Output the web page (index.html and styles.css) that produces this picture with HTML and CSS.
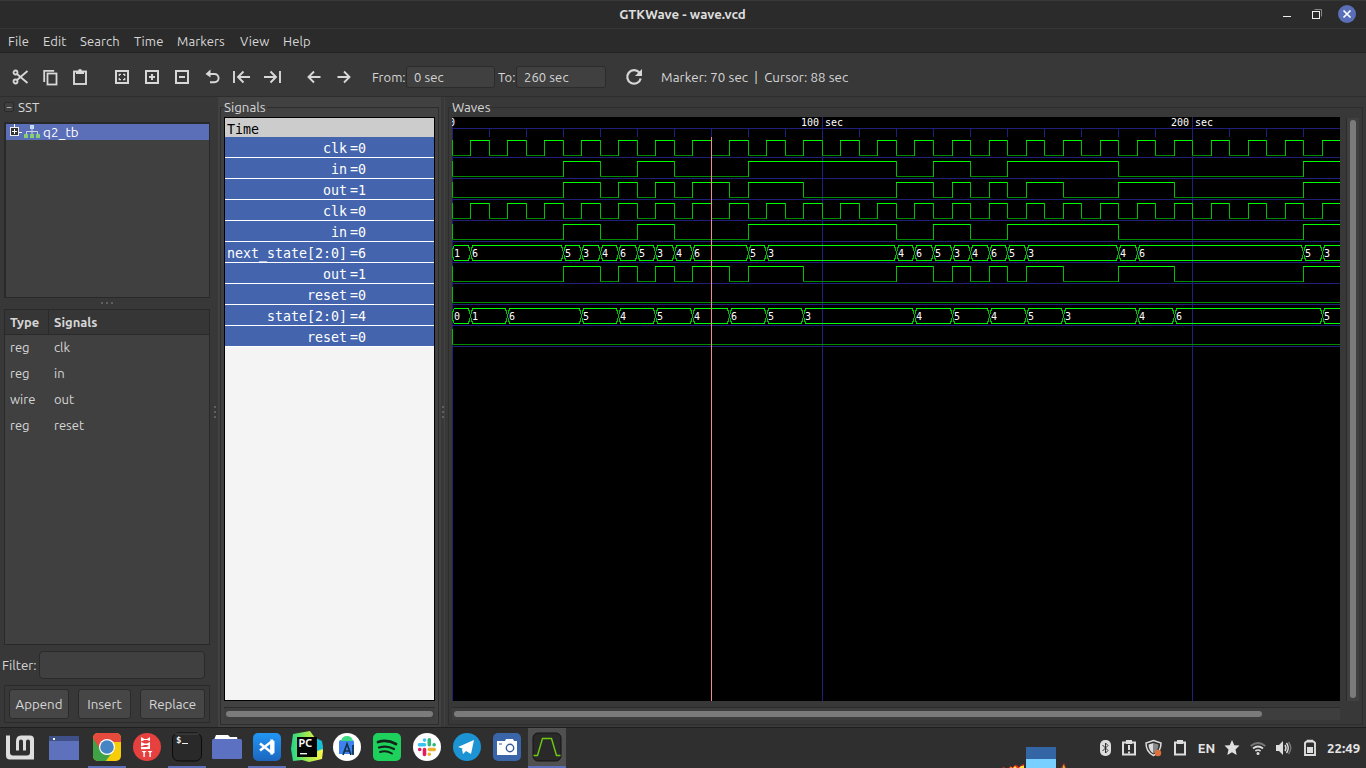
FILE: index.html
```html
<!DOCTYPE html>
<html lang="en">
<head>
<meta charset="utf-8">
<title>GTKWave - wave.vcd</title>
<link rel="stylesheet" href="styles.css">
</head>
<body>
<div class="screen">
  <header class="titlebar">
    <span class="title">GTKWave - wave.vcd</span>
    <svg class="winbtns" width="96" height="28" viewBox="1270 0 96 28">
      <path d="M1283 16.5h8" stroke="#eee"/>
      <path d="M1314.500 9.500h7v7" fill="none" stroke="#888"/>
      <rect x="1312.500" y="11.500" width="7" height="7" fill="none" stroke="#f0f0f0"/>
      <circle cx="1347" cy="14" r="9" fill="#5b6eb8"/>
      <path d="M1343.500 10.500l7 7m0-7l-7 7" stroke="#fff" stroke-width="1.700"/>
    </svg>
  </header>
  <nav class="menubar">
    <span class="m1">File</span><span class="m2">Edit</span><span class="m3">Search</span><span class="m4">Time</span><span class="m5">Markers</span><span class="m6">View</span><span>Help</span>
  </nav>
  <div class="toolbar">
    <svg class="ic" viewBox="0 0 30 30"><g fill="none" stroke="#d8d8d8" stroke-width="1.800"><circle cx="10.500" cy="10.500" r="2"/><circle cx="10.500" cy="19.500" r="2"/><path d="M12 12l10.500 9M12 18l10.500-9"/></g></svg>
    <svg class="ic" viewBox="0 0 30 30"><g fill="none" stroke="#d8d8d8" stroke-width="1.800"><path d="M9.200 20V8.800h10"/><rect x="12.500" y="11.500" width="9" height="11"/></g></svg>
    <svg class="ic" viewBox="0 0 30 30"><rect x="9" y="9.500" width="12" height="12.500" fill="none" stroke="#d8d8d8" stroke-width="1.900"/><path d="M11 9h2a2 2 0 0 1 4 0h2v3h-8z" fill="#d8d8d8"/></svg>
    <i class="gap"></i>
    <svg class="ic" viewBox="0 0 30 30"><g fill="none" stroke="#d8d8d8"><rect x="9" y="9" width="12" height="12" stroke-width="2"/><path d="M12.300 14v-1.700H14m2 0h1.700V14m0 2v1.700H16m-2 0h-1.700V16" stroke-width="1.300"/></g></svg>
    <svg class="ic" viewBox="0 0 30 30"><g fill="none" stroke="#d8d8d8" stroke-width="2"><rect x="9" y="9" width="12" height="12"/><path d="M12 15h6m-3-3v6"/></g></svg>
    <svg class="ic" viewBox="0 0 30 30"><g fill="none" stroke="#d8d8d8" stroke-width="2"><rect x="9" y="9" width="12" height="12"/><path d="M12 15h6"/></g></svg>
    <svg class="ic" viewBox="0 0 30 30"><path d="M11 12h6.500a4 4 0 0 1 0 8.200H13" fill="none" stroke="#d8d8d8" stroke-width="1.900"/><path d="M8.500 12l5-4.500v8z" fill="#d8d8d8"/></svg>
    <svg class="ic" viewBox="0 0 30 30"><path d="M7 9v12M23 15H11m5.500-5.500L11 15l5.500 5.500" fill="none" stroke="#d8d8d8" stroke-width="1.900"/></svg>
    <svg class="ic" viewBox="0 0 30 30"><path d="M23 9v12M7 15h12m-5.500-5.500L19 15l-5.500 5.500" fill="none" stroke="#d8d8d8" stroke-width="1.900"/></svg>
    <i class="gap"></i>
    <svg class="ic" viewBox="0 0 30 30"><path d="M21.500 15H9.500m5.500-5.500L9.500 15l5.500 5.500" fill="none" stroke="#d8d8d8" stroke-width="1.900"/></svg>
    <svg class="ic" viewBox="0 0 30 30"><path d="M8.500 15h12m-5.500-5.500l5.500 5.500-5.500 5.500" fill="none" stroke="#d8d8d8" stroke-width="1.900"/></svg>
    <label class="from">From:</label><span class="entry e1">0 sec</span>
    <label class="to">To:</label><span class="entry e2">260 sec</span>
    <svg class="ic reload" viewBox="0 0 30 30"><path d="M20.300 10.500A6.800 6.800 0 1 0 21.700 16.500" fill="none" stroke="#d8d8d8" stroke-width="2.200"/><path d="M23 7v7h-7z" fill="#d8d8d8"/></svg>
    <span class="status">Marker: 70 sec&nbsp; |&nbsp; Cursor: 88 sec</span>
  </div>
  <main class="panes">
    <section class="sst">
      <div class="sst-head"><span class="minus">−</span><span>SST</span></div>
      <div class="tree">
        <div class="node">
          <svg width="36" height="16" viewBox="6 124 36 16"><path d="M14.500 124v4M19 132.500h3" stroke="#fff"/><rect x="10.500" y="127.500" width="8" height="8" fill="#333" stroke="#eee"/><path d="M12 131.500h5m-2.500-2.500v5" stroke="#fff"/><path d="M26.500 134v-2.500h11V134m-5.500-5v5" fill="none" stroke="#ccd3e8"/><rect x="30" y="125" width="4" height="4" fill="#c5dbf5"/><path d="M24 134h4v4h-4zm6 0h4v4h-4zm6 0h4v4h-4z" fill="#86ce74"/></svg>
          <span>q2_tb</span>
        </div>
      </div>
      <div class="grip"><i></i><i></i><i></i></div>
      <div class="list">
        <div class="row head"><span>Type</span><span>Signals</span></div>
        <div class="row"><span>reg</span><span>clk</span></div>
        <div class="row"><span>reg</span><span>in</span></div>
        <div class="row"><span>wire</span><span>out</span></div>
        <div class="row"><span>reg</span><span>reset</span></div>
      </div>
      <div class="filter"><span>Filter:</span><span class="input"></span></div>
      <div class="buttons"><button class="b1">Append</button><button class="b2">Insert</button><button class="b3">Replace</button></div>
    </section>
    <div class="vgrip"><i></i><i></i><i></i></div>
    <section class="signals">
      <fieldset class="frame">
        <legend>Signals</legend>
        <div class="names">
          <div class="time">Time</div>
          <div class="sig"><span>clk</span><b>=0</b></div>
          <div class="sig"><span>in</span><b>=0</b></div>
          <div class="sig"><span>out</span><b>=1</b></div>
          <div class="sig"><span>clk</span><b>=0</b></div>
          <div class="sig"><span>in</span><b>=0</b></div>
          <div class="sig"><span>next_state[2:0]</span><b>=6</b></div>
          <div class="sig"><span>out</span><b>=1</b></div>
          <div class="sig"><span>reset</span><b>=0</b></div>
          <div class="sig"><span>state[2:0]</span><b>=4</b></div>
          <div class="sig"><span>reset</span><b>=0</b></div>
        </div>
        <div class="hscroll"><i></i></div>
      </fieldset>
    </section>
    <div class="vgrip g2"><i></i><i></i><i></i></div>
    <section class="waves">
      <fieldset class="frame">
        <legend>Waves</legend>
        <div class="wrow">
          <svg id="wave" width="888" height="584" viewBox="452 117 888 584"></svg>
          <div class="vscroll"><i></i></div>
        </div>
        <div class="hscroll"><i></i></div>
      </fieldset>
    </section>
  </main>
  <footer class="taskbar">
    <svg width="40" height="40" viewBox="0 728 40 40"><path d="M6 735.500h4v17q0 3 3 3h14q3 0 3-3v-11q0-2-2-2t-2 2v9h-3v-9q0-2-2-2t-2 2v9h-3v-9q0-6 5-6h9q4 0 4 4v20h-24q-4 0-4-4z" fill="#dedede"/></svg>
    <svg width="47" height="40" viewBox="40 728 47 40"><path d="M49 736h30v24H49z" fill="#5d71bd"/><path d="M49 736h30v5H49z" fill="#3f4f87"/><path d="M53 738h2v2h-2z" fill="#fff"/></svg>
    <svg class="open" viewBox="87 728 40 40"><defs><clipPath id="cc"><rect x="93" y="733" width="28" height="28" rx="5"/></clipPath></defs><g clip-path="url(#cc)"><path d="M93 733h28v28H93z" fill="#f7cd08"/><path d="M93 733h28v9h-14l-7 9-7-12z" fill="#e64a3d"/><path d="M93 738l8 13 6 4 4-1-6 8H93z" fill="#3fa247"/></g><circle cx="107" cy="747" r="8" fill="#fff"/><circle cx="107" cy="747" r="6.800" fill="#4685c4"/></svg>
    <svg viewBox="127 728 40 40"><circle cx="147" cy="747" r="14" fill="#e6403f"/><path d="M141 737l3.500 2h2.500l3-2v4l-3-1h-2.500l-3.500 1.500zM141 742l3.500 1.500h2.500l3-1.500v4l-3-1h-2.500l-3.500 1.500zM141 747l3.500 0h2.500l3-2v4l-9 .3zM141.500 751h5l-1.700 1.800V757h-1.400v-4.200zm6 0h5l-1.700 1.800V757h-1.400v-4.200z" fill="#fff"/></svg>
    <svg class="open" viewBox="167 728 40 40"><rect x="172.500" y="733" width="29" height="28" rx="6" fill="#292929" stroke="#0b0b0b"/><path d="M175 734h24" stroke="#4b4b4b"/><text x="176" y="743" class="prompt">$</text><path d="M182 743.500h6" stroke="#eee"/></svg>
    <svg viewBox="207 728 40 40"><path d="M214 740l2-5h12l2 2h7l1 5h-24z" fill="#fff"/><rect x="212" y="739" width="30" height="20" rx="1.500" fill="#5d71c2"/></svg>
    <svg class="open" viewBox="247 728 40 40"><defs><linearGradient id="vs" x2="0" y2="1"><stop stop-color="#2196f3"/><stop offset="1" stop-color="#1c66c0"/></linearGradient></defs><rect x="253" y="733" width="28" height="28" rx="5" fill="url(#vs)"/><path d="M260 743.500l11.500 9V741.500L260 750.500" fill="none" stroke="#fff" stroke-width="2.500"/><path d="M270.500 739l4 2v12l-4 2z" fill="#fff"/></svg>
    <svg viewBox="287 728 40 40"><defs><linearGradient id="pc"><stop stop-color="#20d789"/><stop offset=".5" stop-color="#9ee850"/><stop offset="1" stop-color="#fcf84a"/></linearGradient></defs><path d="M293 734l17-3 5 7 7 5 1 8-1 8-13 3-7-2-9 1-2-12z" fill="url(#pc)"/><path d="M316 738l6 3 1 8-6 2z" fill="#13bfd6"/><path d="M297 737h20v20h-20z" fill="#050505"/><text x="298.500" y="747" class="pctext">PC</text><path d="M300 753.700h7" stroke="#fff" stroke-width="1.300"/></svg>
    <svg viewBox="327 728 40 40"><circle cx="347" cy="747" r="14" fill="#fff"/><path d="M339 742q0-2 2-2h11q2 0 2 2v12h-15z" fill="#3d82ee"/><path d="M341 741q1-5 6-5t6 5z" fill="#3ddc84"/><path d="M343 755l4-11 4 11m-7-4h6m3-6v10" fill="none" stroke="#12324b" stroke-width="1.700"/></svg>
    <svg viewBox="367 728 40 40"><rect x="373" y="733" width="28" height="28" rx="5" fill="#1ed15d"/><g fill="none" stroke="#13251a" stroke-linecap="round"><path d="M378 742q9-3 18 2" stroke-width="2.700"/><path d="M379 747.500q8-2.500 15 1.500" stroke-width="2.200"/><path d="M380 752q6-2 12 1.500" stroke-width="1.900"/></g></svg>
    <svg viewBox="407 728 40 40"><circle cx="427" cy="747" r="14" fill="#fff"/><g stroke-width="3.600" stroke-linecap="round" fill="none"><path d="M424.500 740v.1M419.500 744.700h5" stroke="#36c5f0"/><path d="M429.300 739.800v5m4.800-.1h.1" stroke="#2eb67d"/><path d="M429.300 754.200v.1m0-4.800h5" stroke="#ecb22e"/><path d="M424.500 749.500v5m-4.800-5h.1" stroke="#e01e5a"/></g></svg>
    <svg viewBox="447 728 40 40"><circle cx="467" cy="747" r="14" fill="#1c93d2"/><path d="M458 747l16-7-3 14-5-3-3 3-1-5 9-6-7 6z" fill="#fff"/></svg>
    <svg viewBox="487 728 40 40"><rect x="493" y="733" width="28" height="28" rx="5" fill="#3a65a8"/><path d="M497 741h8l1-2h7l1 2h3v14h-20z" fill="#fff"/><circle cx="510" cy="748" r="3.700" fill="#fff" stroke="#355b98" stroke-width="1.400"/><path d="M499 744h3" stroke="#355b98"/></svg>
    <svg class="open active" viewBox="527 728 40 40"><rect x="533" y="733" width="28" height="28" rx="5" fill="#292929" stroke="#151515"/><path d="M533.500 755.500h4l5-17h9l5 17h4" fill="none" stroke="#6fca12" stroke-width="1.400"/></svg>
    <div class="spacer"></div>
    <svg class="runner" viewBox="1000 745 70 23"><path d="M1026 747h30v12h-30z" fill="#3465a4"/><path d="M1026 759h30v9h-30z" fill="#77d0ff"/><path d="M1002 768l2-1 1 1zM1009 768l1-2 3 2zm3 0l3-3h1l3 2 4-3 1 1v3zM1061 768l3-5 2 5z" fill="#e22b20"/><path d="M1010 768l1-1 1 1zm3 0l2-2 2 2zm6 0l2-2h2l1-1v3z" fill="#ffe13a"/><path d="M1063 768v-2l1-1 1 3z" fill="#7de03a"/></svg>
    <svg class="tray" viewBox="1095 728 100 40"><rect x="1100" y="740" width="11" height="16" rx="5" fill="#ddd"/><path d="M1102.500 745l5.500 5.500-2.500 2.500v-10l2.500 2.500-5.500 5.500" fill="none" stroke="#2f2f2f"/><path d="M1123 742.500h12v12h-12z" fill="none" stroke="#ddd" stroke-width="2"/><path d="M1126 740h6v4h-6z" fill="#ddd"/><path d="M1129 745v5m0 1.500v2" stroke="#ddd" stroke-width="2"/><path d="M1153.500 740.500l7.500 2.500q0 9-7.500 12.500-7.500-3.500-7.500-12.500z" fill="none" stroke="#ddd" stroke-width="1.500"/><path d="M1153.500 743v10.500q-5-3-5-9z" fill="#ddd"/><path d="M1153.500 743v10.500q5-3 5-9z" fill="#888"/><circle cx="1158" cy="753" r="3.200" fill="#e0713a"/><path d="M1175 742.500h10v12h-10z" fill="none" stroke="#ddd" stroke-width="2"/><path d="M1177 740h6v4h-6z" fill="#ddd"/></svg>
    <span class="lang">EN</span>
    <svg class="tray2" viewBox="1220 728 100 40"><path d="M1232 740l2.300 5.200 5.200.4-4 3.900 1.200 5.600-4.700-2.900-4.700 2.900 1.200-5.600-4-3.900 5.200-.4z" fill="#e0e0e0"/><g fill="none" stroke="#ddd" stroke-width="1.700"><path d="M1250.700 746q7.300-6 14.600 0" stroke="#777"/><path d="M1253 748.500q5-4 10 0m-7.600 2.500q2.600-2 5.200 0"/></g><circle cx="1258" cy="753.500" r="1.500" fill="#ddd"/><path d="M1276 745h3l4-4v14l-4-4h-3z" fill="#ddd"/><path d="M1285 745q2 3 0 6" fill="none" stroke="#ddd" stroke-width="1.400"/><path d="M1286.500 743q3.500 5 0 10" fill="none" stroke="#ddd" stroke-width="1.400"/><path d="M1288.500 742q4.500 6 0 12" fill="none" stroke="#777" stroke-width="1.400"/><path d="M1305 743l1.500-1.500h7L1315 743v12h-10z" fill="none" stroke="#ddd" stroke-width="1.900"/><path d="M1307 739.800h6v2h-6zM1307 747h6v6h-6z" fill="#ddd"/></svg>
    <span class="clock">22:49</span>
  </footer>
</div>
<script src="wave.js"></script>
</body>
</html>
```

FILE: styles.css
```css
* { box-sizing: border-box; }
body { margin: 0; background: #383838; color: #d6d6d6; font: 13px "Ubuntu", "Noto Sans", sans-serif; overflow: hidden; }
.screen { width: 1366px; height: 768px; display: flex; flex-direction: column; }
svg { display: block; flex: none; }
span, label, legend { white-space: nowrap; }

.titlebar { height: 29px; background: #2b2b2b; border-top: 1px solid #383838; border-bottom: 1px solid #373737; display: grid; grid-template-columns: 96px 1fr 96px; flex: none; }
.title { grid-column: 2; text-align: center; font-weight: 600; line-height: 27px; font-size: 13.300px; color: #dcdcdc; padding-right: 1px; }
.winbtns { margin-top: -1px; }

.menubar { height: 24px; background: #2b2b2b; border-bottom: 1px solid #242424; display: flex; flex: none; padding-left: 8px; line-height: 24px; font-size: 13px; letter-spacing: .1px; }
.m1 { width: 35px; } .m2 { width: 37px; } .m3 { width: 54px; } .m4 { width: 43px; } .m5 { width: 63px; } .m6 { width: 43px; }

.toolbar { height: 44px; flex: none; display: flex; align-items: center; padding: 4px 0 0 5px; border-bottom: 1px solid #2d2d2d; }
.ic { width: 30px; height: 30px; }
.gap { width: 12px; flex: none; }
.from { width: 34px; margin-left: 13px; }
.to { width: 18px; margin-left: 3px; }
.entry { height: 22px; line-height: 20px; background: #404040; border: 1px solid #2b2b2b; border-radius: 3px; padding-left: 7px; letter-spacing: .1px; }
.e1 { width: 89px; }
.e2 { width: 90px; }
.reload { margin-left: 13px; }
.status { margin-left: 12px; padding-top: 2px; font-size: 13.300px; letter-spacing: .08px; }

.panes { height: 630px; flex: none; display: flex; }
.sst { width: 211px; padding: 0 1px 0 4px; flex: none; }
.sst-head { height: 25px; display: flex; padding: 3px 0 0; line-height: 15px; gap: 4px; font-size: 13.300px; }
.minus { width: 10px; height: 10px; margin-top: 2px; border: 1px solid #2a2a2a; border-radius: 2px; font-size: 10px; line-height: 7px; text-align: center; background: #3f3f3f; }
.tree { height: 176px; background: #404040; border: 1px solid #292929; border-width: 2px 1px 1px 2px; }
.node { height: 16px; background: #5b6eb8; color: #fff; display: flex; line-height: 18px; font-size: 13.300px; }
.node span { padding-left: 1px; letter-spacing: .2px; }
.grip { height: 11px; display: flex; gap: 3px; justify-content: center; padding-top: 4px; }
.grip i, .vgrip i { width: 2px; height: 2px; background: #606060; }
.list { height: 336px; background: #404040; border: 1px solid #292929; }
.row { height: 26px; display: flex; line-height: 25px; }
.row span { padding-left: 5px; }
.row span:first-child { width: 44px; flex: none; }
.row.head { height: 25px; line-height: 24px; background: #363636; border-bottom: 1px solid #2a2a2a; font-weight: 700; font-size: 13px; }
.head span:first-child { border-right: 1px solid #2a2a2a; }
.filter { height: 40px; display: flex; align-items: center; margin-left: -2px; font-size: 13.300px; }
.filter .input { width: 166px; height: 28px; margin-left: auto; margin-right: 5px; border: 1px solid #2a2a2a; border-radius: 4px; background: #404040; }
.buttons { height: 38px; border: 1px solid #2b2b2b; display: flex; align-items: center; padding-left: 4px; gap: 9px; }
button { height: 30px; padding: 0; border: 1px solid #2a2a2a; border-radius: 3px; background: #464646; color: #d6d6d6; font: 13.300px "Ubuntu", "Noto Sans", sans-serif; }
.b1 { width: 60px; } .b2 { width: 53px; } .b3 { width: 65px; }
.vgrip { width: 7px; flex: none; display: flex; flex-direction: column; align-items: center; gap: 3px; padding-top: 309px; }
.g2 { width: 3px; }

.signals { width: 223px; background: #414141; flex: none; padding: 0 2px; }
.waves { width: 922px; padding-left: 3px; border-left: 1px solid #424242; flex: none; }
.frame { margin: 3px 0 0; padding: 0 3px; height: 625px; min-width: 0; border: 1px solid #2d2d2d; }
.signals .frame { width: 219px; }
.waves .frame { width: 915px; }
legend { padding: 0 1px 0 0; height: 15px; line-height: 15px; font-size: 13.300px; }
.names { width: 211px; height: 584px; border: 1px solid #000; background: #f4f4f4; margin-top: 2px; font: 13.300px "DejaVu Sans Mono", monospace; }
.time { height: 19px; line-height: 23px; background: #ccc; color: #000; padding-left: 2px; }
.sig { height: 21px; line-height: 23px; background: #4465ad; border-bottom: 1px solid #fff; color: #fff; display: flex; }
.sig span { width: 122px; text-align: right; }
.sig b { font-weight: 400; margin-left: 3px; }
.hscroll { height: 13px; margin-top: 6px; border-top: 1px solid #2b2b2b; padding: 3px 2px; background: #3e3e3e; }
.hscroll i { display: block; height: 6px; border-radius: 3px; background: #7b7b7b; }
.signals .hscroll { width: 211px; }
.waves .hscroll { width: 888px; }
.waves .hscroll i { width: 808px; }
.wrow { display: flex; margin-top: 2px; gap: 6px; height: 584px; }
.vscroll { width: 13px; height: 583px; margin-top: 1px; border-left: 1px solid #2b2b2b; padding: 2px 3px; background: #404040; }
.vscroll i { display: block; width: 6px; height: 578px; border-radius: 3px; background: #7b7b7b; }
#wave { background: #000; shape-rendering: crispEdges; }
.wt { font: 10px "DejaVu Sans Mono", monospace; fill: #fff; }

.taskbar { height: 41px; border-top: 1px solid #1f1f1f; background: #2f2f2f; display: flex; flex: none; position: relative; }
.taskbar svg { height: 40px; }
.taskbar svg:nth-child(n+3):not(.runner):not(.tray):not(.tray2) { width: 40px; }
.open { background: linear-gradient(#5b6eb8, #5b6eb8) 1px 38px / 38px 2px no-repeat; }
.open.active { background: linear-gradient(#5b6eb8, #5b6eb8) 1px 38px / 38px 2px no-repeat, linear-gradient(#505050, #505050) 1px 0 / 38px 40px no-repeat; }
.prompt { font: 700 9px "DejaVu Sans Mono", monospace; fill: #eee; }
.pctext { font: 700 10.5px "Ubuntu", "Noto Sans", sans-serif; fill: #fff; }
.spacer { flex: 1; }
.taskbar .runner { position: absolute; left: 1000px; bottom: 0; width: 70px; height: 23px; }
.tray, .tray2 { width: 100px; }
.lang { width: 25px; padding-right: 2px; text-align: center; font-weight: 600; line-height: 41px; font-size: 13px; color: #e4e4e4; }
.clock { width: 46px; padding-left: 7px; font-weight: 700; line-height: 41px; font-size: 13.300px; color: #e4e4e4; }
```

FILE: wave.js
```js
// The time scale is 3.7037 px per second; times from 130 s on round up a half pixel
const px = t => 452 + Math.floor(t * 3.7 + (t >= 130 ? 0.5 : 0));
const END = 1340;
const out = [];
const rect = (x, y, w, h, c) => out.push(`<rect x="${x}" y="${y}" width="${w}" height="${h}" fill="${c}"/>`);
const text = (x, y, s) => out.push(`<text class="wt" x="${x}" y="${y}">${s}</text>`);
const GRID = '#20207a', HIGH = '#00ff00', LOW = '#008a00', EDGE = '#00c000';

// Single-bit traces list the times at which the level toggles
const clk = Array.from({ length: 47 }, (_, i) => 5 + i * 5);
const inp = [30, 40, 50, 60, 80, 120, 130, 140, 150, 180, 230];
const res = [30, 40, 45, 50, 55, 60, 65, 75, 80, 95, 120, 130, 135, 140, 145, 150, 155, 165, 180, 195, 230];
const next = [[0,1],[5,6],[30,5],[35,3],[40,4],[45,6],[50,5],[55,3],[60,4],[65,6],[80,5],[85,3],[120,4],[125,6],[130,5],[135,3],[140,4],[145,6],[150,5],[155,3],[180,4],[185,6],[230,5],[235,3]];
const state = [[0,0],[5,1],[15,6],[35,5],[45,4],[55,5],[65,4],[75,6],[85,5],[95,3],[125,4],[135,5],[145,4],[155,5],[165,3],[185,4],[195,6],[235,5]];

function bit(row, toggles) {
  const y = 140 + row * 21;
  let x = 452, high = false;
  rect(452, y, 1, 15, EDGE);
  toggles.concat([null]).forEach(t => {
    const nx = t === null ? END : px(t);
    rect(x, high ? y : y + 15, nx - x, 1, high ? HIGH : LOW);
    if (t !== null) rect(nx, y, 1, 16, EDGE);
    x = nx;
    high = !high;
  });
}

function bus(row, values) {
  const y = 140 + row * 21;
  values.forEach(([t, v], i) => {
    const x = px(t);
    const nx = i + 1 < values.length ? px(values[i + 1][0]) : END + 1;
    rect(x + 2, y, nx - x - 3, 1, HIGH);
    rect(x + 2, y + 15, nx - x - 3, 1, HIGH);
    if (i) {
      rect(x - 2, y + 1, 1, 2, EDGE); rect(x + 2, y + 1, 1, 2, EDGE);
      rect(x - 1, y + 2, 1, 4, EDGE); rect(x + 1, y + 2, 1, 4, EDGE);
      rect(x - 1, y + 10, 1, 4, EDGE); rect(x + 1, y + 10, 1, 4, EDGE);
      rect(x, y + 6, 1, 4, EDGE);
      rect(x - 2, y + 13, 1, 2, EDGE); rect(x + 2, y + 13, 1, 2, EDGE);
    } else {
      rect(x, y + 3, 1, 10, EDGE); rect(x + 1, y + 1, 1, 3, EDGE); rect(x + 1, y + 12, 1, 3, EDGE);
    }
    text(x + 2, y + 12, v);
  });
}

// Grid: row separators, ruler ticks and the 100 sec lines
for (let i = 0; i < 10; i++) rect(452, 157 + i * 21, 888, 1, GRID);
rect(452, 128, 888, 1, GRID);
for (let t = 0; t < 240; t += 10) rect(px(t), 128, 1, 9, GRID);
[0, 100, 200].forEach(t => rect(px(t), 117, 1, 584, GRID));

text(449, 126, '0');
text(801, 126, '100'); text(825, 126, 'sec');
text(1171, 126, '200'); text(1195, 126, 'sec');

bit(0, clk); bit(1, inp); bit(2, res); bit(3, clk); bit(4, inp);
bus(5, next); bit(6, res); bit(7, []); bus(8, state); bit(9, []);
rect(711, 137, 1, 564, '#f08c8c');
document.getElementById('wave').innerHTML = out.join('');
```
